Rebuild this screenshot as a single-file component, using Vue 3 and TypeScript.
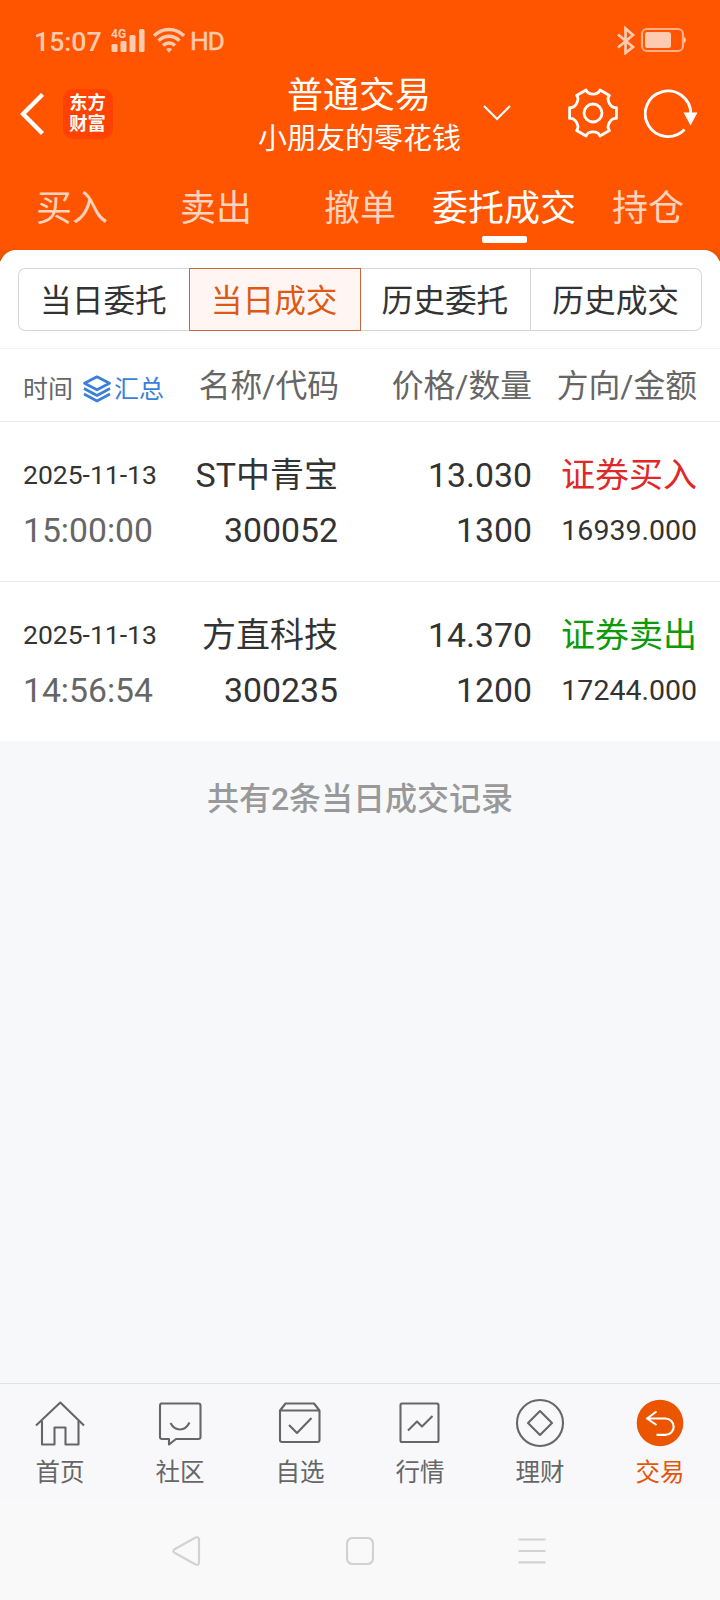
<script setup lang="ts">
interface Trade {
  date: string
  time: string
  name: string
  code: string
  price: string
  volume: string
  side: string
  kind: 'buy' | 'sell'
  amount: string
}

const tabs: string[] = ['买入', '卖出', '撤单', '委托成交', '持仓']
const activeTab = '委托成交'
const segments: string[] = ['当日委托', '当日成交', '历史委托', '历史成交']
const activeSegment = '当日成交'

const trades: Trade[] = [
  { date: '2025-11-13', time: '15:00:00', name: 'ST中青宝', code: '300052', price: '13.030', volume: '1300', side: '证券买入', kind: 'buy', amount: '16939.000' },
  { date: '2025-11-13', time: '14:56:54', name: '方直科技', code: '300235', price: '14.370', volume: '1200', side: '证券卖出', kind: 'sell', amount: '17244.000' },
]

const navItems: string[] = ['首页', '社区', '自选', '行情', '理财', '交易']

// Six-lobed gear outline: one scoop repeated every 60 degrees.
function gearPath(): string {
  const scoop = [[-7, -23], [-5, -17.6], [5, -17.6], [7, -23]]
  let d = ''
  for (let k = 0; k < 6; k++) {
    const a = (k * Math.PI) / 3
    const p = scoop.map(([x, y]) =>
      `${(x * Math.cos(a) - y * Math.sin(a)).toFixed(2)} ${(x * Math.sin(a) + y * Math.cos(a)).toFixed(2)}`)
    d += `${k === 0 ? 'M' : 'L'}${p[0]}C${p[1]} ${p[2]} ${p[3]}`
  }
  return d + 'Z'
}
const gear = gearPath()
</script>

<template>
  <div class="screen">
    <header class="top">
      <div class="status">
        <span class="clock">15:07</span>
        <svg class="signal" width="34" height="26" viewBox="0 0 34 26" fill="currentColor">
          <rect x="0.5" y="17" width="6" height="8" rx="1.5" />
          <rect x="9.5" y="14" width="6" height="11" rx="1.5" />
          <rect x="18.5" y="8" width="6" height="17" rx="1.5" />
          <rect x="28" y="2" width="5.5" height="23" rx="1.5" />
          <text x="0" y="11" class="net">4G</text>
        </svg>
        <svg class="wifi" width="32" height="26" viewBox="0 0 32 26" fill="none" stroke="currentColor" stroke-width="3.5">
          <path d="M1 8.700C9.500 0.300 22.500 0.300 31 8.700" />
          <path d="M5.500 13.700C11.500 7.900 20.500 7.900 26.500 13.700" />
          <path d="M10 18.500C13.500 15.300 18.500 15.300 22 18.500" />
          <path d="M13 22Q16 20.200 19 22L16 25.800Z" fill="currentColor" stroke="none" />
        </svg>
        <span class="hd">HD</span>
        <svg class="bluetooth" width="20" height="30" viewBox="0 0 20 30" fill="none" stroke="currentColor" stroke-width="2.700">
          <path d="M2 9.500L17 22L9.500 28V3.500L17 10L2 22.500" />
        </svg>
        <svg class="battery" width="46" height="26" viewBox="0 0 46 26" fill="none" stroke="currentColor">
          <rect x="2" y="2" width="41" height="22" rx="5" stroke-width="2.200" opacity=".75" />
          <rect x="5" y="5" width="26" height="16" rx="2.500" fill="currentColor" stroke="none" />
          <path d="M44 10Q46 11 46 13T44 16Z" fill="currentColor" stroke="none" />
        </svg>
      </div>

      <div class="titlebar">
        <div class="left">
          <svg width="25" height="42" viewBox="0 0 25 42" fill="none" stroke="#fff" stroke-width="4.300">
            <path d="M22.500 1.500L3 21L22.500 40.500" />
          </svg>
          <div class="logo"><span>东方</span><span>财富</span></div>
        </div>
        <div class="title">
          <div class="main">普通交易</div>
          <div class="sub">小朋友的零花钱</div>
        </div>
        <div class="right">
          <svg class="chevron" width="28" height="18" viewBox="0 0 28 18" fill="none" stroke="#fff" stroke-width="2.200">
            <path d="M1 2L14 15L27 2" />
          </svg>
          <svg class="gear" width="52" height="52" viewBox="-26 -26 52 52" fill="none" stroke="#fff" stroke-width="2.800" stroke-linejoin="round">
            <path :d="gear" />
            <circle r="9" />
          </svg>
          <svg class="reload" width="54" height="50" viewBox="0 0 54 50" fill="none" stroke="#fff" stroke-width="2.900">
            <path d="M40.500 40.500A22.800 22.800 0 1 1 46.800 24.500" />
            <path d="M39.500 23.500H53.500L46.500 36.500Z" fill="#fff" stroke="none" />
          </svg>
        </div>
      </div>

      <nav class="tabs">
        <div v-for="tab in tabs" :key="tab" class="tab" :class="{ active: tab === activeTab }">
          <span>{{ tab }}</span>
          <i v-if="tab === activeTab"></i>
        </div>
      </nav>
    </header>

    <section class="sheet-wrap">
      <div class="sheet">
        <div class="segments">
          <div v-for="seg in segments" :key="seg" class="segment" :class="{ active: seg === activeSegment }">{{ seg }}</div>
        </div>
        <div class="row head">
          <div class="timehead">
            <span>时间</span>
            <svg width="28" height="28" viewBox="0 0 28 28" fill="none" stroke="#3a7fd9" stroke-width="2.700" stroke-linejoin="round">
              <path d="M14 1.800L26.500 8.300L14 14.800L1.500 8.300Z" />
              <path d="M1 13.500L14 20.500L27 13.500" />
              <path d="M1 19L14 26L27 19" />
            </svg>
            <span class="sum">汇总</span>
          </div>
          <div>名称/代码</div>
          <div>价格/数量</div>
          <div>方向/金额</div>
        </div>
        <div v-for="t in trades" :key="t.code" class="row trade">
          <div class="when"><span class="date">{{ t.date }}</span><span class="time">{{ t.time }}</span></div>
          <div class="stock"><span>{{ t.name }}</span><span class="num">{{ t.code }}</span></div>
          <div><span class="num">{{ t.price }}</span><span class="num">{{ t.volume }}</span></div>
          <div><span :class="t.kind">{{ t.side }}</span><span class="amount">{{ t.amount }}</span></div>
        </div>
      </div>
    </section>

    <main class="summary">共有2条当日成交记录</main>

    <nav class="bottom">
      <div v-for="(item, i) in navItems" :key="item" class="item" :class="{ active: i === 5 }">
        <svg width="50" height="50" viewBox="0 0 50 50" fill="none" stroke="#666" stroke-width="2.100" stroke-linejoin="round">
          <template v-if="i === 0">
            <path d="M1 25.500L25.300 2.500L49 25.500" />
            <path d="M7 21V44.500H19.500V27.500H30.500V44.500H43.500V21" />
          </template>
          <template v-else-if="i === 1">
            <path d="M6 3.500H43.500Q45.500 3.500 45.500 5.500V37Q45.500 39 43.500 39H21L14 44.500V39H7Q5 39 5 37V5.500Q5 3.500 7 3.500Z" />
            <path d="M15.500 23Q19 29.500 25 29.500T34.500 22.500" />
          </template>
          <template v-else-if="i === 2">
            <path d="M5 10.500H44.500V40Q44.500 42 42.500 42H7Q5 42 5 40V10.500L10.500 3.500H39L44.500 10.500" />
            <path d="M14 25L22 33L36.500 18" />
          </template>
          <template v-else-if="i === 3">
            <rect x="5.500" y="3.500" width="38" height="38.500" rx="1.500" />
            <path d="M13 30.500L22 21.500L27 26.500L37.500 16" />
          </template>
          <template v-else-if="i === 4">
            <circle cx="25" cy="23" r="23" />
            <path d="M25 11L37 23L25 35L13 23Z" />
          </template>
          <template v-else>
            <circle cx="25" cy="23" r="23.300" fill="#eb5500" stroke="none" />
            <path d="M21.500 11.500L12 18.500L21.500 25M12.500 18.500H30.500A8.200 8.200 0 0 1 30.500 34.900H21.500" stroke="#fff" />
          </template>
        </svg>
        <span>{{ item }}</span>
      </div>
    </nav>

    <footer class="system">
      <svg class="back" width="30" height="32" viewBox="0 0 30 32">
        <path d="M3.500 14.300L24.500 2.500Q28 1.500 28 4.500V27.500Q28 30.500 24.500 29.500L3.500 17.700Q1 16 3.500 14.300Z" />
      </svg>
      <svg width="28" height="28" viewBox="0 0 28 28"><rect x="1" y="1" width="26" height="26" rx="5.500" /></svg>
      <svg width="28" height="28" viewBox="0 0 28 28"><path d="M.5 2.500H27.500M.5 14H27.500M.5 25.300H27.500" /></svg>
    </footer>
  </div>
</template>

<style>
body {
  margin: 0;
}
</style>

<style scoped>
.screen {
  width: 720px;
  height: 1600px;
  display: flex;
  flex-direction: column;
  overflow: hidden;
  background: #f7f8fa;
  color: #333;
  font-family: Roboto, "Noto Sans CJK SC", sans-serif;
}
svg {
  display: block;
  flex: none;
}
.top {
  height: 250px;
  background: #f50;
  color: #fff;
}
.status {
  height: 80px;
  display: flex;
  align-items: center;
  color: #ffcbb0;
  font-size: 26.700px;
  font-weight: 500;
  line-height: 30px;
  padding: 0 34px;
}
.clock {
  width: 77px;
  padding-top: 3px;
}
.net {
  font-size: 12px;
  font-weight: 700;
  stroke: none;
}
.wifi {
  margin-left: 8px;
}
.hd {
  margin-left: 5px;
  padding-top: 2px;
  font-size: 26.500px;
  font-weight: 400;
  letter-spacing: -1.500px;
  -webkit-text-stroke: 0.4px currentColor;
}
.bluetooth {
  margin-left: auto;
  margin-right: 4px;
}
.titlebar {
  height: 84px;
  display: grid;
  grid-template-columns: 240px 240px 240px;
}
.left {
  display: flex;
  align-items: center;
  height: 67px;
  padding-left: 20px;
}
.logo {
  width: 50px;
  height: 50px;
  margin-left: 18px;
  border-radius: 10px;
  background: #ff4200;
  display: flex;
  flex-direction: column;
  align-items: center;
  justify-content: center;
  font-size: 18.300px;
  font-weight: 700;
  line-height: 22px;
}
.logo span {
  height: 22px;
  margin: -1px 1px 0 0;
}
.title {
  text-align: center;
  white-space: nowrap;
}
.main {
  font-size: 36px;
  line-height: 32px;
  margin-left: -2px;
}
.sub {
  font-size: 29px;
  line-height: 36px;
  margin-top: 9px;
  margin-left: -1px;
}
.right {
  display: flex;
  align-items: center;
  height: 66px;
}
.chevron {
  margin-left: 3px;
}
.gear {
  margin-left: 56px;
}
.reload {
  margin: 1px 0 0 24.500px;
}
.tabs {
  height: 86px;
  display: grid;
  grid-template-columns: repeat(5, 144px);
}
.tab {
  display: flex;
  flex-direction: column;
  align-items: center;
  font-size: 36px;
  line-height: 40px;
  padding-top: 25px;
  color: #ffd3bd;
}
.tab.active {
  color: #fff;
}
.tab i {
  width: 45px;
  height: 7px;
  margin-top: 7px;
  border-radius: 2px;
  background: #fff;
}
.sheet-wrap {
  background: linear-gradient(#eb5500 0 11px, #fff 11px);
}
.sheet {
  background: #fff;
  border-radius: 16px 16px 0 0;
}
.segments {
  display: flex;
  height: 98px;
  box-sizing: border-box;
  padding: 18px 18px 17px;
}
.segment {
  flex: 1;
  box-sizing: border-box;
  border: 1px solid #d5d6da;
  border-left-width: 0;
  text-align: center;
  font-size: 31.700px;
  line-height: 65px;
  height: 63px;
  padding-right: 1px;
}
.segment:first-child {
  border-left-width: 1px;
  border-right-width: 0;
  border-radius: 7px 0 0 7px;
}
.segment:last-child {
  border-radius: 0 7px 7px 0;
}
.segment.active {
  border: 1px solid #c8683a;
  background: #fff6f3;
  color: #dc5a14;
}
.row {
  display: grid;
  grid-template-columns: 157px 159px 193px 165px;
  padding: 0 23px;
  text-align: right;
  white-space: nowrap;
}
.head {
  height: 72px;
  border-top: 1px solid #f4f4f4;
  border-bottom: 1px solid #ebebeb;
  font-size: 31.800px;
  line-height: 75px;
  color: #666;
}
.timehead {
  display: flex;
  align-items: center;
  height: 72px;
  box-sizing: border-box;
  font-size: 25px;
  padding-top: 8px;
  line-height: 68px;
}
.timehead span {
  padding-top: 2px;
}
.timehead svg {
  margin: 0 3px 0 10px;
}
.sum {
  color: #3a7fd9;
}
.trade {
  height: 159px;
  border-bottom: 1px solid #ebebeb;
  font-size: 34px;
  line-height: 55px;
}
.trade:last-child {
  border-bottom: 0;
}
.trade > div {
  display: flex;
  flex-direction: column;
  padding-top: 26px;
}
.trade > .stock {
  padding-right: 1px;
}
.trade span {
  height: 55px;
}
.trade .when {
  text-align: left;
}
.date {
  font-size: 26.500px;
  line-height: 53px;
}
.time {
  color: #666;
  font-size: 33.700px;
}
.num {
  font-size: 33.800px;
}
.amount {
  font-size: 28.500px;
}
.buy {
  color: #e02828;
}
.sell {
  color: #0a9a0a;
}
.summary {
  flex: 1;
  padding-top: 35px;
  text-align: center;
  font-size: 32px;
  font-weight: 500;
  line-height: 46px;
  color: #999;
}
.bottom {
  height: 117px;
  border-top: 1px solid #e2e3e6;
  background: #f8f8fb;
  display: grid;
  grid-template-columns: repeat(6, 120px);
}
.item {
  display: flex;
  flex-direction: column;
  align-items: center;
  padding-top: 16px;
  font-size: 24.500px;
  line-height: 36px;
  color: #666;
}
.item span {
  margin-top: 5px;
}
.item svg {
  overflow: visible;
}
.item.active {
  color: #e6560a;
}
.system {
  height: 99px;
  box-sizing: border-box;
  padding: 1px 3px 0 0;
  background: #f9f9f9;
  display: flex;
  justify-content: center;
  align-items: center;
  gap: 144px;
}
.system svg {
  fill: none;
  stroke: #d2d2d2;
  stroke-width: 2.200;
}
.system .back {
  margin: 0 1px 0 -1px;
}
</style>
